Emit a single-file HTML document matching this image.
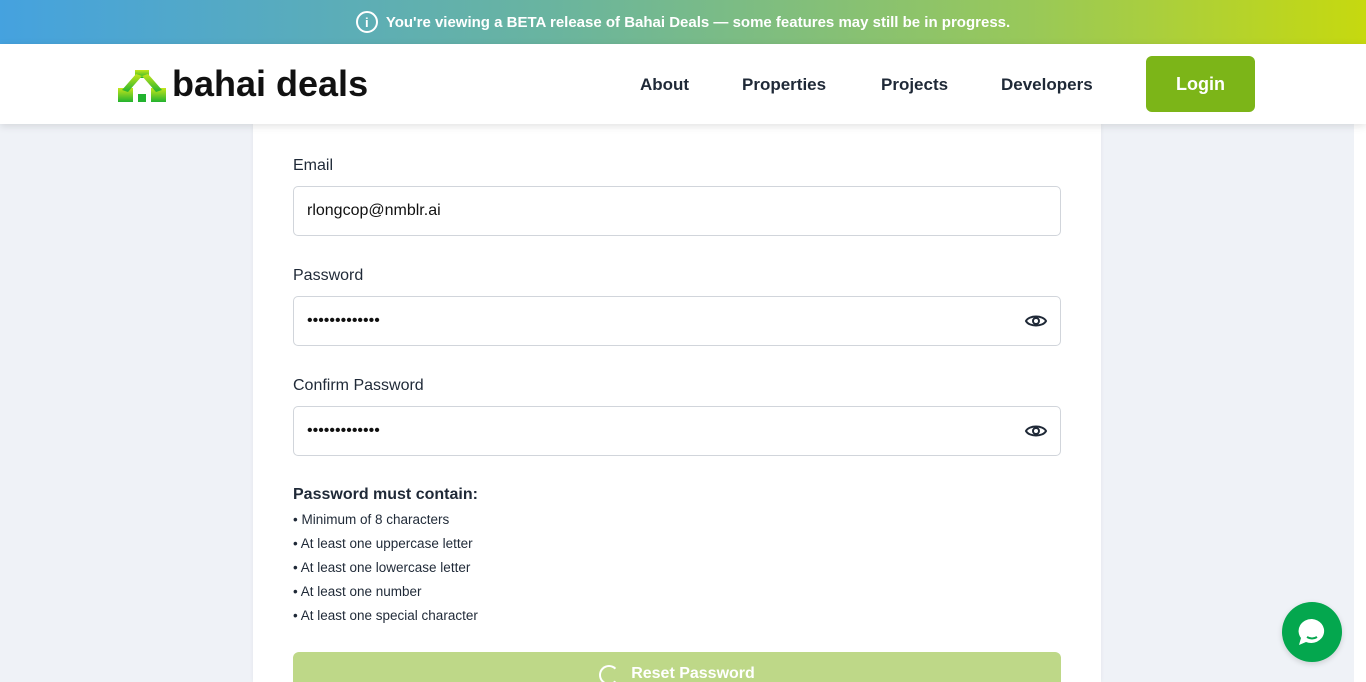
<!DOCTYPE html>
<html><head><meta charset="utf-8"><style>
*{box-sizing:border-box;margin:0;padding:0}
html,body{width:1366px;height:682px;overflow:hidden}
body{font-family:"Liberation Sans",sans-serif;background:#fff;position:relative;color:#1f2937}
.bg{position:absolute;left:0;top:0;width:1354px;height:682px;background:#eff2f7}
.banner{position:absolute;left:0;top:0;width:1366px;height:44px;background:linear-gradient(90deg,#45a2df 0%,#69b4a0 40%,#98c85a 75%,#c6d90f 100%);color:#fff;font-weight:bold;font-size:15px;display:flex;align-items:center;justify-content:center;gap:8px}
.banner .i{width:22px;height:22px;border:2px solid #fff;border-radius:50%;display:flex;align-items:center;justify-content:center;font-size:13px;font-weight:bold}
header{position:absolute;top:44px;left:0;width:1366px;height:80px;background:#fff;box-shadow:0 2px 8px rgba(0,0,0,.12);z-index:2}
.logo{position:absolute;left:118px;top:22px;display:flex;align-items:flex-end}
.logo span{font-size:36px;font-weight:bold;color:#111;margin-left:6px;line-height:36px}
nav a{position:absolute;top:31px;font-size:17px;font-weight:bold;color:#1f2937;text-decoration:none}
.login{position:absolute;left:1146px;top:12px;width:109px;height:56px;background:#7cb518;color:#fff;border-radius:6px;font-size:18px;font-weight:bold;display:flex;align-items:center;justify-content:center}
.card{position:absolute;left:253px;top:124px;width:848px;height:558px;background:#fff;box-shadow:0 0 4px rgba(0,0,0,.06);overflow:hidden}
label{position:absolute;left:40px;font-size:16px;color:#1f2937}
.inp{position:absolute;left:40px;width:768px;height:50px;border:1px solid #d1d5db;border-radius:5px;font-size:16px;padding-left:13px;display:flex;align-items:center;color:#111}
.eye{position:absolute;right:12px;top:14px}
.req{position:absolute;left:40px;top:362px;font-size:15px;color:#1f2937}
.req b{font-size:16px;font-weight:bold;display:block;margin-bottom:4px}
.req div{font-size:13.5px;line-height:24px}
.btn{position:absolute;left:40px;top:528px;width:768px;height:50px;background:#bed888;border-radius:6px;color:#fff;font-weight:bold;font-size:16px;display:flex;justify-content:center;padding-top:13px;gap:12px}
.spin{width:20px;height:20px;border:2.5px solid #fff;border-right-color:transparent;border-radius:50%}
.chat{position:absolute;left:1282px;top:602px;width:60px;height:60px;border-radius:50%;background:#04a74e;box-shadow:0 2px 6px rgba(0,0,0,.15)}
</style></head><body>
<div class="bg"></div>
<div class="banner"><div class="i">i</div>You're viewing a BETA release of Bahai Deals — some features may still be in progress.</div>
<header>
<div class="logo"><svg width="48" height="34" viewBox="0 0 48 34"><defs><linearGradient id="g" x1="0" y1="0" x2="0" y2="1"><stop offset="0" stop-color="#c5e51a"/><stop offset="1" stop-color="#22b32f"/></linearGradient></defs><g fill="url(#g)"><rect x="17" y="2" width="14" height="8"/><rect x="0" y="20" width="15" height="14"/><rect x="33" y="20" width="15" height="14"/><polygon points="18,6 24,8 10,24 4,22"/><polygon points="30,6 24,8 38,24 44,22"/></g><rect x="20" y="26" width="8" height="8" fill="#22b32f"/></svg><span>bahai deals</span></div>
<nav><a style="left:640px">About</a><a style="left:742px">Properties</a><a style="left:881px">Projects</a><a style="left:1001px">Developers</a></nav>
<div class="login">Login</div>
</header>
<div class="card">
<label style="top:33px">Email</label>
<div class="inp" style="top:62px">rlongcop@nmblr.ai</div>
<label style="top:143px">Password</label>
<div class="inp" style="top:172px">•••••••••••••<svg class="eye" width="24" height="20" viewBox="0 0 24 20"><path d="M2 10C5 4 19 4 22 10C19 16 5 16 2 10Z" fill="none" stroke="#1f2937" stroke-width="2"/><circle cx="12" cy="10" r="3" fill="none" stroke="#1f2937" stroke-width="2"/></svg></div>
<label style="top:253px">Confirm Password</label>
<div class="inp" style="top:282px">•••••••••••••<svg class="eye" width="24" height="20" viewBox="0 0 24 20"><path d="M2 10C5 4 19 4 22 10C19 16 5 16 2 10Z" fill="none" stroke="#1f2937" stroke-width="2"/><circle cx="12" cy="10" r="3" fill="none" stroke="#1f2937" stroke-width="2"/></svg></div>
<div class="req"><b>Password must contain:</b>
<div>• Minimum of 8 characters</div><div>• At least one uppercase letter</div><div>• At least one lowercase letter</div><div>• At least one number</div><div>• At least one special character</div></div>
<div class="btn"><div class="spin"></div>Reset Password</div>
</div>
<div class="chat"><svg width="60" height="60" viewBox="0 0 60 60"><path d="M30 17a13 12 0 1 1-6 23l-7 3 2-7a13 12 0 0 1 11-19z" fill="#fff"/><path d="M25 35q5 3 10 0" stroke="#04a74e" stroke-width="2" fill="none"/></svg></div>
</body></html>
